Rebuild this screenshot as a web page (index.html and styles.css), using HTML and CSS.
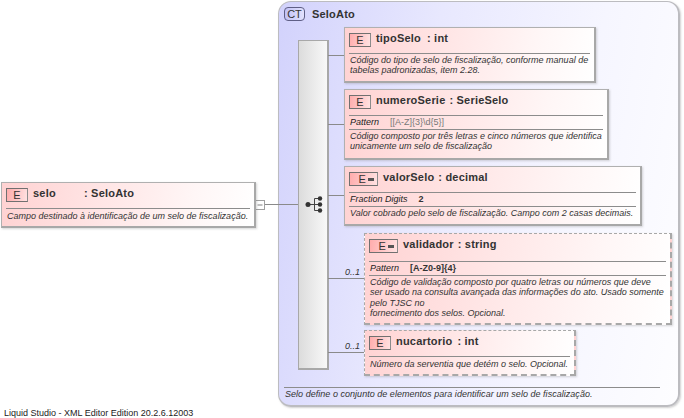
FILE: index.html
```html
<!DOCTYPE html>
<html lang="pt">
<head>
<meta charset="utf-8">
<title>SeloAto</title>
<link rel="stylesheet" href="styles.css">
</head>
<body>
<main class="canvas">
  <div class="type-box">
    <div class="type-head"><span class="ct-badge">CT</span><span class="type-name">SeloAto</span></div>
    <div class="type-doc">Selo define o conjunto de elementos para identificar um selo de fiscalização.</div>
  </div>

  <div class="seq-bar"></div>
  <svg class="wires" width="684" height="418" viewBox="0 0 684 418">
    <g class="wire">
      <path d="M255.500 204.500H298"/>
      <path d="M328 55.500H344"/>
      <path d="M328 124.500H344"/>
      <path d="M328 195.500H344"/>
      <path d="M328 278.500H364"/>
      <path d="M328 352.500H364"/>
    </g>
    <rect class="collapse" x="255.500" y="200.500" width="9" height="9"/>
    <path class="collapse-minus" d="M257.500 204.500H262.500M257.500 205.500H262.500"/>
    <g class="seq-icon">
      <path d="M308 204.500H314.500M314.500 198.500V210.500M314.500 198.500H320M314.500 204.500H320M314.500 210.500H320"/>
      <circle cx="308" cy="204.500" r="2.500"/>
      <circle cx="320" cy="198.500" r="2.200"/>
      <circle cx="320" cy="204.500" r="2.200"/>
      <circle cx="320" cy="210.500" r="2.200"/>
    </g>
  </svg>

  <article class="el el-selo">
    <header class="el-head"><span class="badge">E</span><span class="el-name el-name-selo">selo</span><span class="el-type">: SeloAto</span></header>
    <p class="doc">Campo destinado à identificação de um selo de fiscalização.</p>
  </article>

  <article class="el el-tipo">
    <header class="el-head"><span class="badge">E</span><span class="el-name">tipoSelo</span><span class="el-type">: int</span></header>
    <p class="doc">Código do tipo de selo de fiscalização, conforme manual de<br>tabelas padronizadas, item 2.28.</p>
  </article>

  <article class="el el-numero">
    <header class="el-head"><span class="badge">E</span><span class="el-name el-name-tight">numeroSerie</span><span class="el-type">: SerieSelo</span></header>
    <div class="facet"><i>Pattern</i><b class="facet-val facet-grey">[[A-Z]{3}\d{5}]</b></div>
    <p class="doc">Código composto por três letras e cinco números que identifica<br>unicamente um selo de fiscalização</p>
  </article>

  <article class="el el-valor">
    <header class="el-head"><span class="badge badge-wide">E<span class="dash"></span></span><span class="el-name el-name-tight">valorSelo</span><span class="el-type">: decimal</span></header>
    <div class="facet"><i>Fraction Digits</i><b class="facet-val">2</b></div>
    <p class="doc">Valor cobrado pelo selo de fiscalização. Campo com 2 casas decimais.</p>
  </article>

  <span class="occurs occ-validador">0..1</span>
  <article class="el el-opt el-validador">
    <header class="el-head"><span class="badge badge-wide">E<span class="dash"></span></span><span class="el-name el-name-tight">validador</span><span class="el-type">: string</span></header>
    <div class="facet"><i>Pattern</i><b class="facet-val">[A-Z0-9]{4}</b></div>
    <p class="doc">Código de validação composto por quatro letras ou números que deve<br>ser usado na consulta avançada das informações do ato. Usado somente<br>pelo TJSC no<br>fornecimento dos selos. Opcional.</p>
  </article>

  <span class="occurs occ-nucartorio">0..1</span>
  <article class="el el-opt el-nucartorio">
    <header class="el-head"><span class="badge">E</span><span class="el-name el-name-near">nucartorio</span><span class="el-type">: int</span></header>
    <p class="doc">Número da serventia que detém o selo. Opcional.</p>
  </article>

  <footer class="credit">Liquid Studio - XML Editor Edition 20.2.6.12003</footer>
</main>
</body>
</html>
```
FILE: styles.css
```css
* { box-sizing: border-box; }
html, body { margin: 0; padding: 0; background: #fff; }
.canvas {
  position: relative;
  width: 684px;
  height: 418px;
  overflow: hidden;
  font-family: "Liberation Sans", Arial, sans-serif;
  color: #222;
}
.type-box {
  position: absolute;
  left: 278px;
  top: 1px;
  width: 402px;
  height: 406px;
  border: 1px solid #bcbcc0;
  border-right-width: 2px;
  border-bottom-width: 2px;
  border-radius: 13px;
  background: linear-gradient(100deg, #d2d2fc 0%, #e8e8fe 35%, #f6f6ff 70%, #fdfdff 100%);
  box-shadow: 1px 1px 2px rgba(120,120,120,.35);
  display: flex;
  flex-direction: column;
  justify-content: space-between;
  padding: 5px 5px 5px 5px;
}
.type-head { display: flex; align-items: center; gap: 7px; }
.ct-badge {
  width: 21px;
  height: 14px;
  border: 1px solid #5f5f86;
  border-radius: 4px;
  background: linear-gradient(90deg, #c2c2f6, #e2e2fe);
  font-size: 11px;
  line-height: 13px;
  text-align: center;
  color: #333;
}
.type-name { font-size: 11px; font-weight: bold; color: #333; letter-spacing: .2px; }
.type-doc {
  border-top: 1px solid #8c8c8c;
  font-size: 9px;
  font-style: italic;
  line-height: 11px;
  padding: 1px 0 0 1px;
  margin-right: 13px;
  letter-spacing: .03px;
  color: #333;
}
.seq-bar {
  position: absolute;
  left: 298px;
  top: 40px;
  width: 31px;
  height: 330px;
  border: 1px solid #a8a8a8;
  border-right-width: 2px;
  border-bottom-width: 2px;
  background: linear-gradient(90deg, #dcdcdc, #f8f8f8);
}
.wires { position: absolute; left: 0; top: 0; pointer-events: none; }
.wire path { stroke: #8a8a8a; stroke-width: 1; fill: none; }
.collapse { fill: #fff; stroke: #a0a0a0; stroke-width: 1; }
.collapse-minus { stroke: #c0c0c0; stroke-width: 1; fill: none; }
.seq-icon path { stroke: #444; stroke-width: 1; fill: none; }
.seq-icon circle { fill: #333; }
.el {
  position: absolute;
  padding: 3px 4px 0 4px;
  border: 1px solid #b0b0b0;
  border-right: 2px solid #a8a8a8;
  border-bottom: 2px solid #a8a8a8;
  background: linear-gradient(100deg, #ffd2d2 0%, #ffe8e8 45%, #fff6f6 75%, #ffffff 100%);
  box-shadow: 1px 1px 2px rgba(120,120,120,.3);
}
.el-opt { border: 1px dashed #a8a8a8; border-right: 2px dashed #a8a8a8; border-bottom: 2px dashed #a8a8a8; }
.el-selo { left: 1px; top: 182px; width: 255px; height: 46px; }
.el-tipo { left: 344px; top: 27px; width: 252px; height: 56px; }
.el-numero { left: 344px; top: 89px; width: 265px; height: 71px; }
.el-valor { left: 344px; top: 166px; width: 298px; height: 60px; }
.el-validador { left: 364px; top: 233px; width: 308px; height: 92px; }
.el-nucartorio { left: 364px; top: 330px; width: 212px; height: 46px; }
.el-validador .el-head { height: 24px; }
.el-head {
  display: flex;
  align-items: flex-start;
  height: 22px;
  font-size: 11px;
  font-weight: bold;
  color: #333;
  letter-spacing: .2px;
}
.badge {
  flex: none;
  width: 22px;
  height: 14px;
  margin: 2px 5px 0 0;
  border: 1px solid #707070;
  border-right-color: #8c8c8c;
  background: linear-gradient(100deg, #ffacac, #ffe2e2);
  font-size: 11px;
  font-weight: normal;
  line-height: 13px;
  text-align: center;
  color: #333;
  display: flex;
  justify-content: center;
  align-items: center;
  gap: 2px;
}
.badge-wide { width: 29px; justify-content: flex-end; padding-right: 3px; }
.dash { width: 6px; height: 3px; background: #555; }
.el-name { line-height: 15px; margin-right: 6px; }
.el-name-tight { margin-right: 4px; }
.el-name-near { margin-right: 5px; }
.el-name-selo { width: 45px; }
.el-type { line-height: 15px; }
.facet {
  border-top: 1px solid #8c8c8c;
  height: 14px;
  font-size: 9px;
  line-height: 13px;
  display: flex;
  padding-left: 1px;
  color: #222;
}
.facet-val { margin-left: 11px; font-size: 9px; color: #333; }
.facet-grey { font-weight: normal; color: #777; }
.doc {
  margin: 0;
  border-top: 1px solid #8c8c8c;
  padding: 1px 0 0 1px;
  font-size: 9px;
  font-style: italic;
  line-height: 10.300px;
  color: #333;
}
.el-selo .doc, .el-nucartorio .doc { padding-top: 2px; }
.occurs { position: absolute; font-size: 9px; font-style: italic; color: #333; line-height: 12px; }
.occ-validador { left: 345px; top: 266px; }
.occ-nucartorio { left: 345px; top: 340px; }
.credit {
  position: absolute;
  left: 4px;
  top: 407px;
  font-size: 9px;
  line-height: 11px;
  padding-top: 1px;
  color: #222;
}
```
